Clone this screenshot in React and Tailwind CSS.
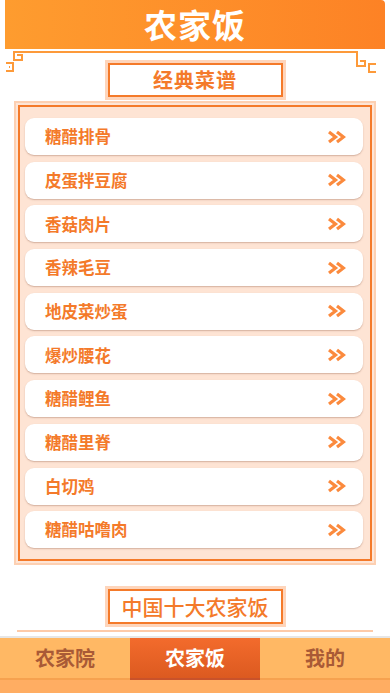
import React from "react";

const dishes = ["糖醋排骨", "皮蛋拌豆腐", "香菇肉片", "香辣毛豆", "地皮菜炒蛋", "爆炒腰花", "糖醋鲤鱼", "糖醋里脊", "白切鸡", "糖醋咕噜肉"];

function Arrows() {
  return (
    <svg width="19" height="14" viewBox="0 0 19 14" fill="none">
      <path d="M2 2 L8.5 7 L2 12" stroke="#fb8a3d" strokeWidth="3.2" strokeLinejoin="miter" />
      <path d="M10 2 L16.5 7 L10 12" stroke="#fb8a3d" strokeWidth="3.2" strokeLinejoin="miter" />
    </svg>
  );
}

function Ornament() {
  return (
    <svg className="absolute left-0 top-[48px]" width="390" height="26" viewBox="0 0 390 26" fill="none">
      <path d="M14 4 H357" stroke="#fd9a3a" strokeWidth="2" />
      <path d="M14 3 V12 H22 V7 H17" stroke="#fd9a3a" strokeWidth="2" />
      <path d="M6 15 H13 V23 H6" stroke="#fd9a3a" strokeWidth="2" />
      <path d="M9 19 H10" stroke="#fd9a3a" strokeWidth="2" />
      <path d="M357 3 V18 H365 V13 H360" stroke="#fd9a3a" strokeWidth="2" />
      <path d="M376 16 H369 V24 H376" stroke="#fd9a3a" strokeWidth="2" />
    </svg>
  );
}

export default function App() {
  return (
    <div className="relative w-[390px] min-h-[693px] bg-white pb-[80px]" style={{ fontFamily: '"Noto Sans CJK SC", "Noto Sans", sans-serif' }}>
      <div className="px-[5px]">
        <div className="h-[49px] bg-gradient-to-r from-[#fe9c2f] to-[#fd8225] flex items-center justify-center rounded-tr-[4px]">
          <span className="text-white text-[33px] font-bold leading-none tracking-[1px]">农家饭</span>
        </div>
      </div>
      <Ornament />
      <div className="relative mt-[14px] mx-auto w-[175px] h-[34px] border-2 border-[#f47a2a] bg-white shadow-[0_0_0_3px_#fed5bb] flex items-center justify-center">
        <span className="text-[#f47a2a] text-[20px] font-bold leading-none tracking-[1px]">经典菜谱</span>
      </div>
      <div className="mt-[4px] ml-[14px] w-[362px] border-2 border-[#fdd0b2] bg-[#fee5d6] p-[2px]">
        <div className="border-2 border-[#f47a2a] bg-[#fee4d4] pt-[11px] pb-[11px] pl-[5px] pr-[7px] flex flex-col gap-[6.7px]">
          {dishes.map((d) => (
            <div key={d} className="h-[37px] bg-white rounded-[9px] shadow-[0_1px_1.5px_rgba(160,110,90,0.45)] flex items-center justify-between pl-[20px] pr-[17px]">
              <span className="text-[#f47a2a] text-[16.5px] font-bold leading-none">{d}</span>
              <Arrows />
            </div>
          ))}
        </div>
      </div>
      <div className="mt-[24px] mx-auto w-[175px] h-[35px] border-2 border-[#f47a2a] bg-white shadow-[0_0_0_3px_#fed5bb] flex items-center justify-center">
        <span className="text-[#f47a2a] text-[21px] font-medium leading-none">中国十大农家饭</span>
      </div>
      <div className="mt-[6px] mx-[17px] h-[120px] border-t-2 border-[#fdcaa8]"></div>

      <div className="fixed left-0 bottom-0 w-[390px] flex flex-col">
        <div className="h-[2px] bg-[#e6e6e6]"></div>
        <div className="grid grid-cols-3 h-[42px]">
          <div className="bg-[#ffb864] border-b-2 border-[#f6a24f] flex items-center justify-center">
            <span className="text-[#a95a36] text-[20px] font-bold leading-none">农家院</span>
          </div>
          <div className="bg-gradient-to-b from-[#f36b2c] to-[#dc5a20] border-b-2 border-[#c9522a] flex items-center justify-center">
            <span className="text-white text-[20px] font-bold leading-none">农家饭</span>
          </div>
          <div className="bg-[#ffb864] border-b-2 border-[#f6a24f] flex items-center justify-center">
            <span className="text-[#a95a36] text-[20px] font-bold leading-none">我的</span>
          </div>
        </div>
        <div className="h-[13px] bg-[#ffad62]"></div>
      </div>
    </div>
  );
}
